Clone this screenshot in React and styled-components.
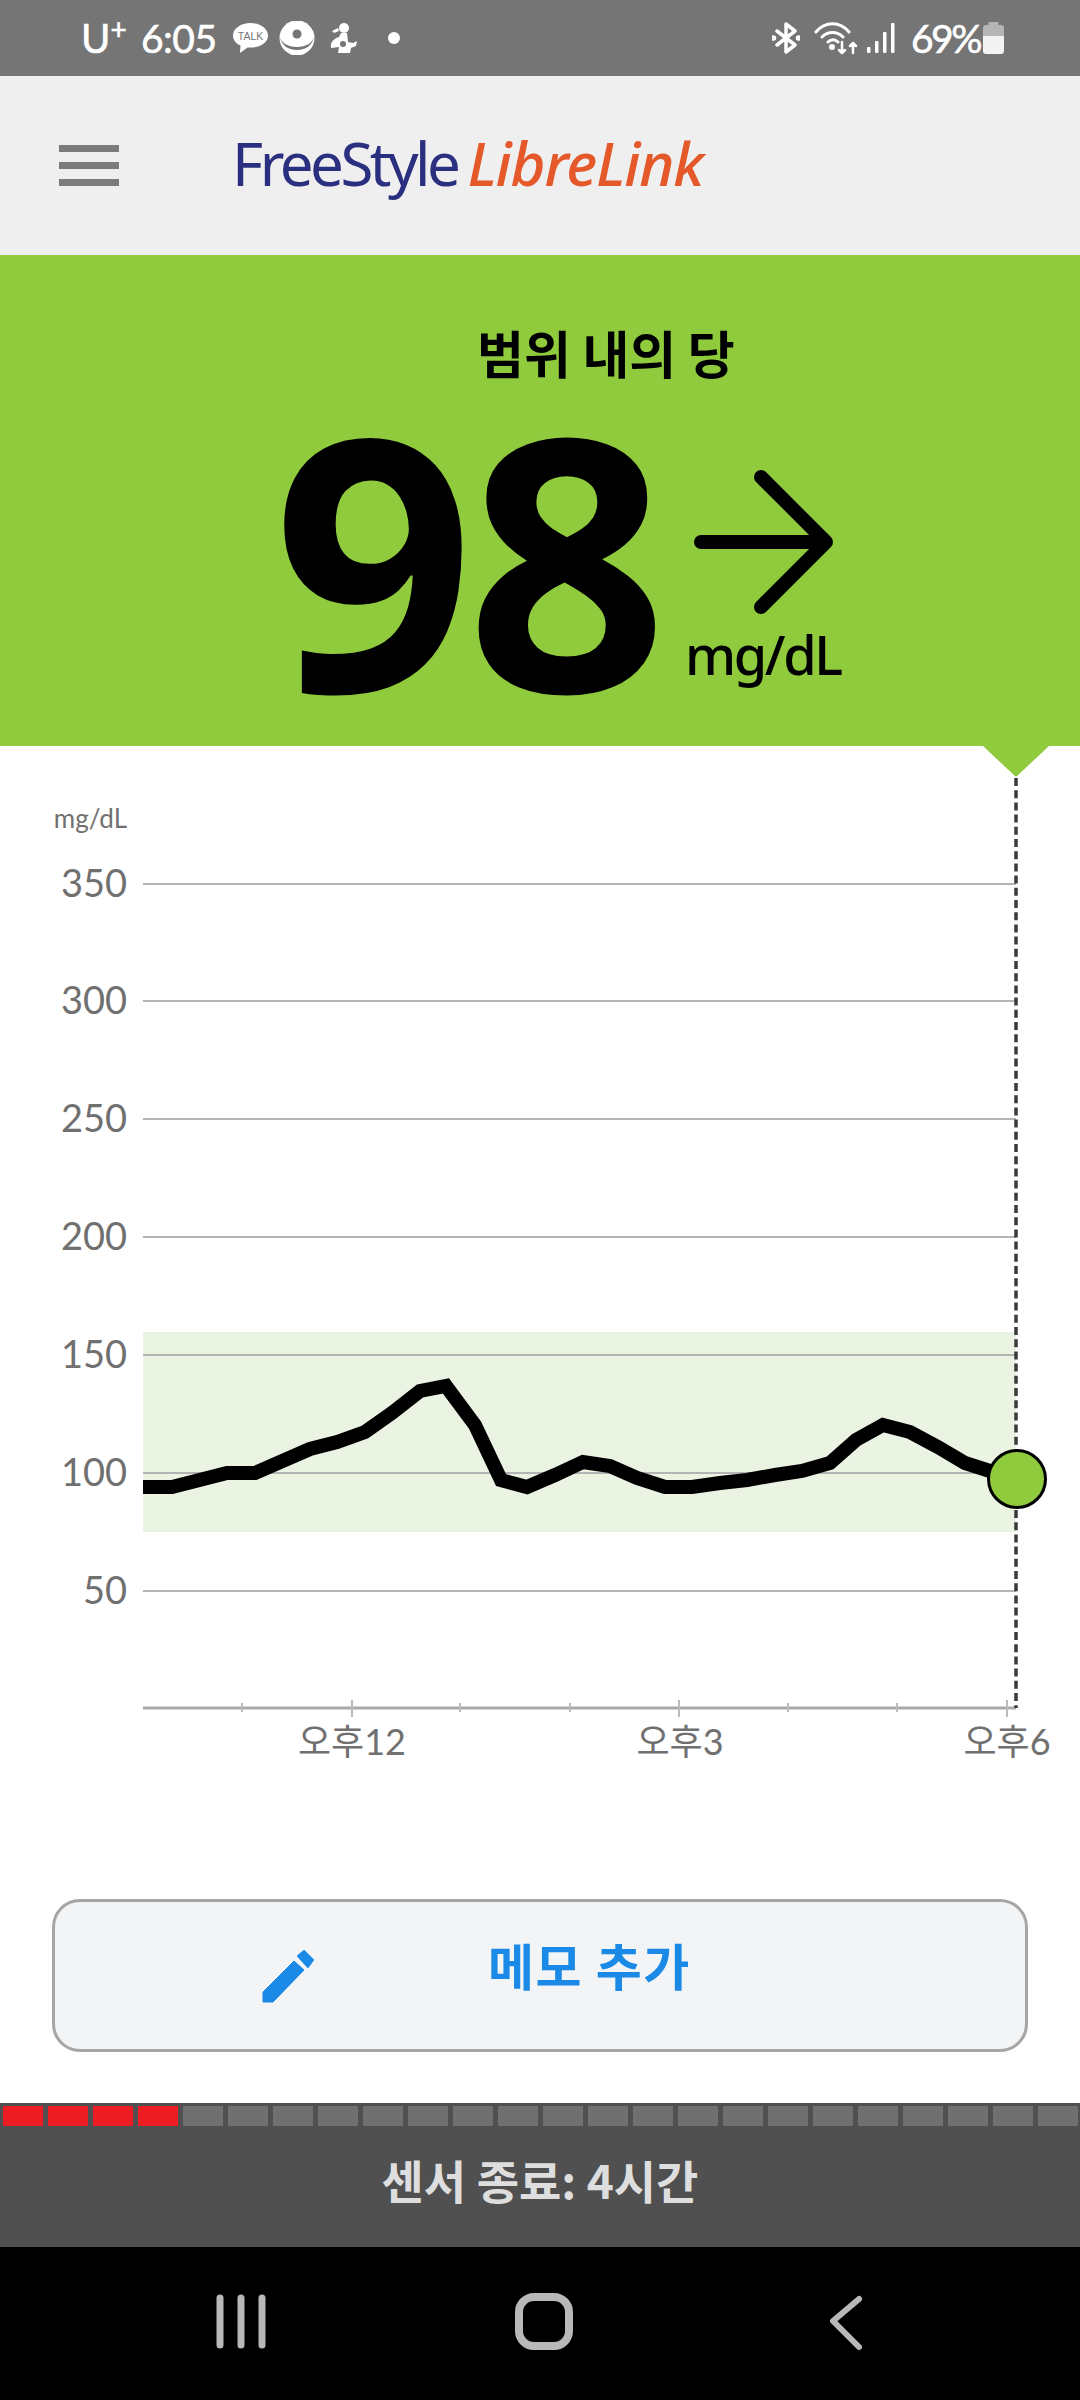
import React from 'react'
import styled, { createGlobalStyle } from 'styled-components'

const GlobalStyle = createGlobalStyle`
  html, body {
    margin: 0;
    padding: 0;
    background: #fff;
  }
`

const Page = styled.div`
  width: 1080px;
  height: 2400px;
  display: flex;
  flex-direction: column;
  overflow: hidden;
  font-family: "Noto Sans", "Noto Sans CJK KR", sans-serif;
`

const StatusBar = styled.div`
  height: 76px;
  flex: none;
  background: #757575;
  color: #fff;
  display: flex;
  align-items: center;
  justify-content: space-between;
  padding: 0 76px 0 81px;
  font-family: "Lato", "Noto Sans", sans-serif;
  font-size: 39px;
  -webkit-text-stroke: 0.6px #fff;
`

const StatusGroup = styled.div`
  display: flex;
  align-items: center;
  gap: ${(p) => p.$gap || 0}px;
`

const Carrier = styled.span`
  flex: none;
  width: 60px;
  font-size: 40px;
  white-space: nowrap;
  sup {
    font-size: 28px;
    line-height: 0;
    vertical-align: 13px;
  }
`

const Clock = styled.span`
  flex: none;
  width: 92px;
  letter-spacing: -0.5px;
  white-space: nowrap;
`

const Percent = styled.span`
  flex: none;
  width: 72px;
  letter-spacing: -2.5px;
  white-space: nowrap;
`

const StatusIcon = styled.svg`
  display: block;
  flex: none;
  margin-left: ${(p) => p.$left || 0}px;
  margin-right: ${(p) => p.$right || 0}px;
`

const Header = styled.div`
  height: 179px;
  flex: none;
  background: #efefef;
  display: flex;
  align-items: center;
  padding-left: 59px;
  gap: 113px;
`

const Burger = styled.div`
  width: 60px;
  height: 41px;
  display: flex;
  flex-direction: column;
  justify-content: space-between;
  span {
    height: 7px;
    background: #7b7b7b;
  }
`

const Logo = styled.div`
  display: flex;
  gap: 10px;
  font-size: 60px;
  line-height: 1;
  margin-bottom: 6px;
`

const LogoPart = styled.span`
  color: ${(p) => p.$color};
  font-style: ${(p) => (p.$italic ? 'italic' : 'normal')};
  font-weight: ${(p) => (p.$italic ? 500 : 400)};
  letter-spacing: ${(p) => (p.$italic ? '-1.2px' : '-3.5px')};
`

const Reading = styled.div`
  height: 491px;
  flex: none;
  background: #8fcb3c;
  display: flex;
  flex-direction: column;
`

const ReadingTitle = styled.div`
  margin: 67px 0 0 477px;
  font-size: 51px;
  font-weight: 700;
  line-height: 60px;
  color: #000;
  font-family: "Noto Sans CJK KR", sans-serif;
`

const ReadingRow = styled.div`
  display: flex;
  margin-top: 24px;
  padding-left: 273px;
`

const Value = styled.div`
  font-size: 352px;
  font-weight: 700;
  line-height: 300px;
  letter-spacing: -8px;
  color: #000;
  width: 412px;
  flex: none;
  font-family: "Noto Sans", sans-serif;
`

const ValueSide = styled.div`
  display: flex;
  flex-direction: column;
  align-items: flex-start;
`

const Arrow = styled.svg`
  display: block;
  margin: 64px 0 0 9px;
`

const Unit = styled.div`
  font-size: 54px;
  font-weight: 500;
  letter-spacing: -2.4px;
  line-height: 60px;
  color: #000;
  margin-top: 10px;
`

const ChartArea = styled.div`
  flex: 1;
  background: #fff;
  display: flex;
  flex-direction: column;
`

const ChartSvg = styled.svg`
  display: block;
  width: 1080px;
  height: 1153px;
  flex: none;
`

const AxisLabel = styled.text`
  font-family: "Lato", "Noto Sans CJK KR", sans-serif;
  font-weight: 400;
  fill: #707070;
  font-size: ${(p) => p.$size}px;
`

const MemoButton = styled.button`
  margin: 0 52px;
  width: 976px;
  height: 153px;
  box-sizing: border-box;
  border: 3px solid #a6a6a6;
  border-radius: 28px;
  background: #f2f4f6;
  display: flex;
  align-items: center;
  padding: 0 0 0 207px;
  gap: 172px;
  color: #1a8ae6;
  font-family: "Noto Sans CJK KR", sans-serif;
`

const MemoLabel = styled.span`
  font-size: 50px;
  font-weight: 700;
  letter-spacing: 1.5px;
  margin-bottom: 24px;
`

const SensorBar = styled.div`
  margin-top: 51px;
  height: 144px;
  flex: none;
  background: #505050;
  display: flex;
  flex-direction: column;
  align-items: center;
`

const Segments = styled.div`
  margin-top: 3px;
  width: 1080px;
  box-sizing: border-box;
  padding: 0 2.5px;
  display: grid;
  grid-template-columns: repeat(24, 1fr);
  column-gap: 5px;
`

const Segment = styled.div`
  height: 20px;
  background: ${(p) => (p.$on ? '#ed1c24' : '#707070')};
`

const SensorText = styled.div`
  margin-top: 23px;
  color: #dedede;
  font-size: 46px;
  font-weight: 700;
  line-height: 60px;
  font-family: "Noto Sans CJK KR", sans-serif;
`

const NavBar = styled.div`
  height: 153px;
  flex: none;
  background: #000;
`

const NavSvg = styled.svg`
  display: block;
  width: 1080px;
  height: 153px;
`

const grid = [
  [350, 884],
  [300, 1001],
  [250, 1119],
  [200, 1237],
  [150, 1355],
  [100, 1473],
  [50, 1591],
]

const line = [
  [143, 1487], [172, 1487], [227, 1473], [255, 1473], [310, 1449], [337, 1442],
  [365, 1432], [392, 1413], [420, 1391], [446, 1386], [475, 1425], [501, 1480],
  [527, 1487], [555, 1475], [583, 1462], [610, 1466], [637, 1478], [665, 1487],
  [692, 1487], [720, 1483], [747, 1480], [775, 1475], [802, 1471], [830, 1463],
  [856, 1440], [883, 1425], [910, 1432], [938, 1447], [965, 1463], [993, 1472],
  [1018, 1479],
]

const ticks = [242, 352, 460, 570, 679, 788, 897, 1007]
const majorTicks = [352, 679, 1007]
const chartTop = 746

const Chart = () => (
  <ChartSvg viewBox={`0 ${chartTop} 1080 1153`}>
    <rect x="143" y="1332" width="873" height="200" fill="#ebf4e3" />
    {grid.map(([v, y]) => (
      <g key={v}>
        <line x1="143" x2="1016" y1={y} y2={y} stroke="#b4b4b4" strokeWidth="2" />
        <AxisLabel x="127" y={y + 13} textAnchor="end" $size={38}>{v}</AxisLabel>
      </g>
    ))}
    <AxisLabel x="127" y="828" textAnchor="end" $size={26}>mg/dL</AxisLabel>
    <line x1="143" x2="1016" y1="1708" y2="1708" stroke="#aaa" strokeWidth="3" />
    {ticks.map((x) => {
      const major = majorTicks.includes(x)
      return <line key={x} x1={x} x2={x} y1={major ? 1700 : 1703} y2={major ? 1717 : 1712} stroke="#bbb" strokeWidth="2" />
    })}
    <AxisLabel x="352" y="1755" textAnchor="middle" $size={36}>오후12</AxisLabel>
    <AxisLabel x="680" y="1755" textAnchor="middle" $size={36}>오후3</AxisLabel>
    <AxisLabel x="1007" y="1755" textAnchor="middle" $size={36}>오후6</AxisLabel>
    <polyline points={line.map((p) => p.join(',')).join(' ')} fill="none" stroke="#000" strokeWidth="14" strokeLinejoin="miter" />
    <line x1="1016" x2="1016" y1="778" y2="1708" stroke="#3a3a3a" strokeWidth="3.5" strokeDasharray="8 4.2" />
    <circle cx="1017" cy="1479" r="28.5" fill="#8fcb3c" stroke="#000" strokeWidth="3" />
    <polygon points="983,746 1049,746 1016,777" fill="#8fcb3c" />
  </ChartSvg>
)

const App = () => (
  <Page>
    <GlobalStyle />
    <StatusBar>
      <StatusGroup>
        <Carrier>U<sup>+</sup></Carrier>
        <Clock>6:05</Clock>
        <StatusGroup $gap={11}>
          <StatusIcon width="35" height="32" viewBox="0 0 35 32">
            <path d="M17.500 1C8 1 0 6.500 0 13.500c0 4.500 3 8 7.500 10L7 31l7.500-5.500h3c10 0 17.500-5 17.500-12S27 1 17.500 1z" fill="#fff" />
            <text x="17.500" y="18" textAnchor="middle" fontSize="10.500" fill="#757575" stroke="none" fontFamily="Liberation Sans">TALK</text>
          </StatusIcon>
          <StatusIcon width="36" height="34" viewBox="0 0 36 34">
            <circle cx="18" cy="17" r="17.500" fill="#fff" />
            <path d="M1 15c1 9 8 14 17 14s16-5 17-14c-1 7-8 11-17 11S2 22 1 15z" fill="#757575" />
            <circle cx="18" cy="13" r="4.500" fill="#757575" />
          </StatusIcon>
          <StatusIcon $left={4} width="28" height="33" viewBox="0 0 28 33">
            <circle cx="14" cy="6" r="5" fill="#fff" />
            <path d="M2 9l6-3 1 3-5 2z" fill="#fff" />
            <path d="M11 11h6l1 9 5 1 4-2-1 5-5 2-1 5H8l1-6-8 1c-1-5 2-9 8-11z" fill="#fff" />
            <circle cx="13" cy="22" r="3" fill="#757575" />
          </StatusIcon>
          <StatusIcon $left={18} width="14" height="14" viewBox="0 0 14 14">
            <circle cx="7" cy="7" r="6" fill="#fff" />
          </StatusIcon>
        </StatusGroup>
      </StatusGroup>
      <StatusGroup>
        <StatusIcon $right={14} width="28" height="32" viewBox="0 0 28 32" fill="none" stroke="#fff" strokeWidth="3.500" strokeLinejoin="round" strokeLinecap="round">
          <path d="M5 9l18 14-9 7V2l9 7L5 23" />
          <circle cx="1.500" cy="16" r="1" fill="#fff" />
          <circle cx="26.500" cy="16" r="1" fill="#fff" />
        </StatusIcon>
        <StatusIcon $right={9} width="44" height="34" viewBox="0 0 44 34" fill="none" stroke="#fff" strokeWidth="3" strokeLinecap="round" strokeLinejoin="round">
          <path d="M2 11C11 0 26 0 35 11M8 16c6-6 15-6 21 0M14 21c3-3 7-3 10 0" />
          <circle cx="18" cy="26" r="1.500" fill="#fff" />
          <path d="M28 21v11l-3-3M28 32l3-3M39 32V22l-3 3M39 22l3 3" strokeWidth="2.500" />
        </StatusIcon>
        <StatusIcon $right={16} width="28" height="30" viewBox="0 0 28 30" fill="#fff">
          <rect x="0" y="24" width="3.500" height="6" rx="1" />
          <rect x="8" y="18" width="3.500" height="12" rx="1" />
          <rect x="16" y="9" width="3.500" height="21" rx="1" />
          <rect x="24" y="0" width="3.500" height="30" rx="1" />
        </StatusIcon>
        <Percent>69%</Percent>
        <StatusIcon width="21" height="32" viewBox="0 0 21 32">
          <rect x="5.500" y="0" width="10" height="5" rx="1" fill="#b5b5b5" />
          <rect x="0" y="3" width="21" height="14" rx="3" fill="#b5b5b5" />
          <path d="M0 14h21v15a3 3 0 0 1-3 3H3a3 3 0 0 1-3-3z" fill="#f3f3f3" />
        </StatusIcon>
      </StatusGroup>
    </StatusBar>

    <Header>
      <Burger><span /><span /><span /></Burger>
      <Logo>
        <LogoPart $color="#2b2f7f">FreeStyle</LogoPart>
        <LogoPart $color="#e4582a" $italic>LibreLink</LogoPart>
      </Logo>
    </Header>

    <Reading>
      <ReadingTitle>범위 내의 당</ReadingTitle>
      <ReadingRow>
        <Value>98</Value>
        <ValueSide>
          <Arrow width="140" height="144" viewBox="0 0 140 144" fill="none" stroke="#000" strokeWidth="14" strokeLinecap="round" strokeLinejoin="round">
            <path d="M7 72h124M67 7l65 65-65 65" />
          </Arrow>
          <Unit>mg/dL</Unit>
        </ValueSide>
      </ReadingRow>
    </Reading>

    <ChartArea>
      <Chart />
      <MemoButton>
        <svg width="54" height="54" viewBox="0 0 54 54" fill="#1a8ae6" stroke="#1a8ae6" strokeLinejoin="round">
          <path d="M1 53V43L32 12l10 9L11 53z" />
          <path d="M36 7l6-5 9 9-5 7z" strokeWidth="2" />
        </svg>
        <MemoLabel>메모 추가</MemoLabel>
      </MemoButton>
      <SensorBar>
        <Segments>
          {Array.from({ length: 24 }).map((_, i) => (
            <Segment key={i} $on={i < 4} />
          ))}
        </Segments>
        <SensorText>센서 종료: 4시간</SensorText>
      </SensorBar>
    </ChartArea>

    <NavBar>
      <NavSvg viewBox="0 2247 1080 153" fill="none" stroke="#b8b8b8" strokeLinecap="round" strokeLinejoin="round">
        <path d="M220 2298v47M241 2298v47M262 2298v47" strokeWidth="7" />
        <rect x="519" y="2297" width="50" height="49" rx="15" strokeWidth="8" />
        <path d="M859 2299l-26 22 26 26" strokeWidth="6" />
      </NavSvg>
    </NavBar>
  </Page>
)

export default App
